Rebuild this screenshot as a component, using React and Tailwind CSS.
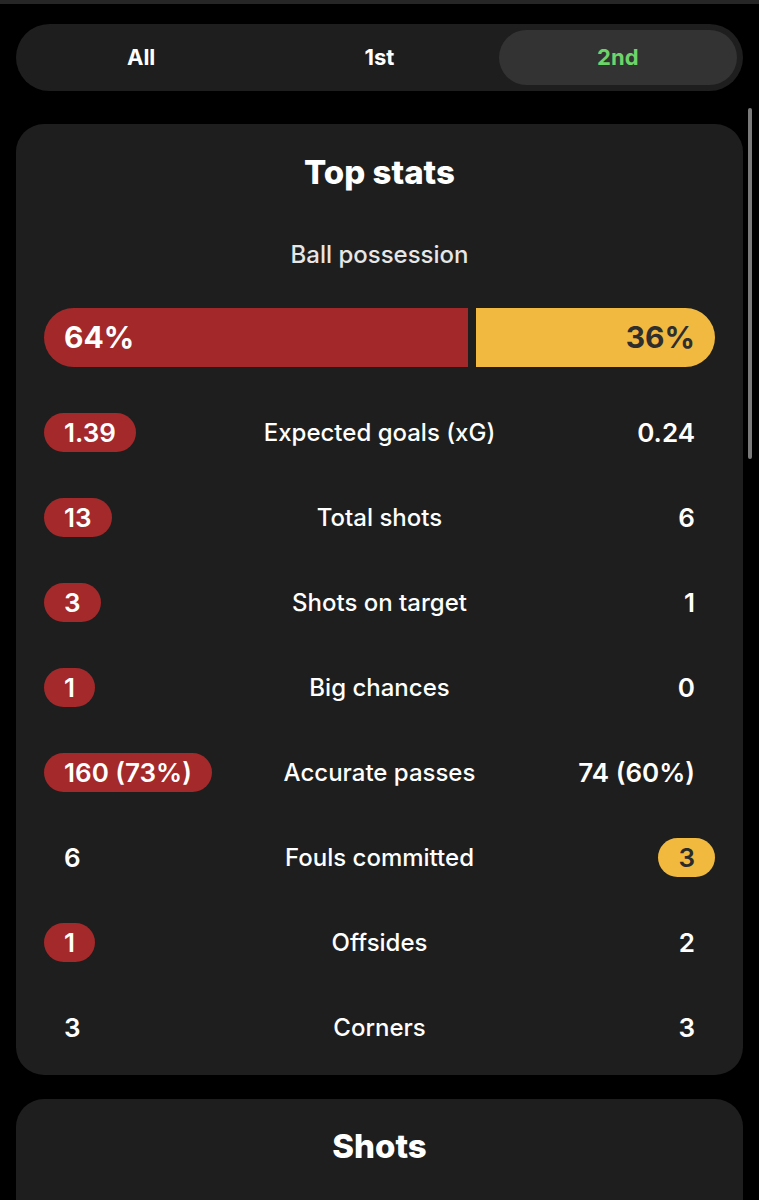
const rows = [
  { label: "Expected goals (xG)", home: "1.39", away: "0.24", win: "home" },
  { label: "Total shots", home: "13", away: "6", win: "home" },
  { label: "Shots on target", home: "3", away: "1", win: "home" },
  { label: "Big chances", home: "1", away: "0", win: "home" },
  { label: "Accurate passes", home: "160 (73%)", away: "74 (60%)", win: "home" },
  { label: "Fouls committed", home: "6", away: "3", win: "away" },
  { label: "Offsides", home: "1", away: "2", win: "home" },
  { label: "Corners", home: "3", away: "3", win: null },
];

const StatRow = ({ label, home, away, win }) => (
  <div className="grid h-[85px] grid-cols-[1fr_auto_1fr] items-center">
    <div className="flex justify-start">
      <span
        className={`rounded-full px-5 py-[4px] text-[26px] font-semibold leading-[31px] ${
          win === "home" ? "bg-[#a3292b] text-white" : "text-white"
        }`}
      >
        {home}
      </span>
    </div>
    <div className="text-center text-[24px] font-medium text-white">{label}</div>
    <div className="flex justify-end">
      <span
        className={`rounded-full px-5 py-[4px] text-[26px] font-semibold leading-[31px] ${
          win === "away" ? "bg-[#f2b93f] text-[#2a2a2a]" : "text-white"
        }`}
      >
        {away}
      </span>
    </div>
  </div>
);

const App = () => {
  const tabs = ["All", "1st", "2nd"];
  const active = 2;

  return (
    <div
      className="relative min-h-screen overflow-hidden bg-black"
      style={{ fontFamily: "Inter, 'Noto Sans', sans-serif" }}
    >
      <div className="h-[4px] bg-[#262626]" />

      <div className="mx-4 mt-5 grid grid-cols-3 rounded-full bg-[#1e1e1e] p-[6px]">
        {tabs.map((t, i) => (
          <div
            key={t}
            className={`flex h-[55px] items-center justify-center rounded-full text-[22px] font-bold ${
              i === active ? "bg-[#333333] text-[#6dd46a]" : "text-white"
            }`}
          >
            {t}
          </div>
        ))}
      </div>

      <div className="mx-4 mt-[33px] rounded-[28px] bg-[#1e1e1e] px-7 pb-[5px] pt-[30px]">
        <h2 className="text-center text-[33px] font-extrabold leading-[36px] text-white">
          Top stats
        </h2>
        <div className="mt-[51px] text-center text-[24px] font-medium leading-[28px] text-[#e6e6e6]">
          Ball possession
        </div>
        <div className="mt-[39px] flex h-[59px] gap-2">
          <div className="flex w-[63.2%] items-center rounded-l-full bg-[#a2282a] pl-5 text-[30px] font-bold text-white">
            64%
          </div>
          <div className="flex flex-1 items-center justify-end rounded-r-full bg-[#f2b940] pr-5 text-[30px] font-bold text-[#2e2e2e]">
            36%
          </div>
        </div>
        <div className="mt-[23px]">
          {rows.map((r) => (
            <StatRow key={r.label} {...r} />
          ))}
        </div>
      </div>

      <div className="mx-4 mt-6 h-[200px] rounded-[28px] bg-[#1e1e1e] pt-[29px]">
        <h2 className="text-center text-[33px] font-extrabold leading-[36px] text-white">
          Shots
        </h2>
      </div>

      <div className="absolute left-[748px] top-[108px] h-[351px] w-[4px] rounded-full bg-[#7a7a7a]" />
    </div>
  );
};

export default App;
